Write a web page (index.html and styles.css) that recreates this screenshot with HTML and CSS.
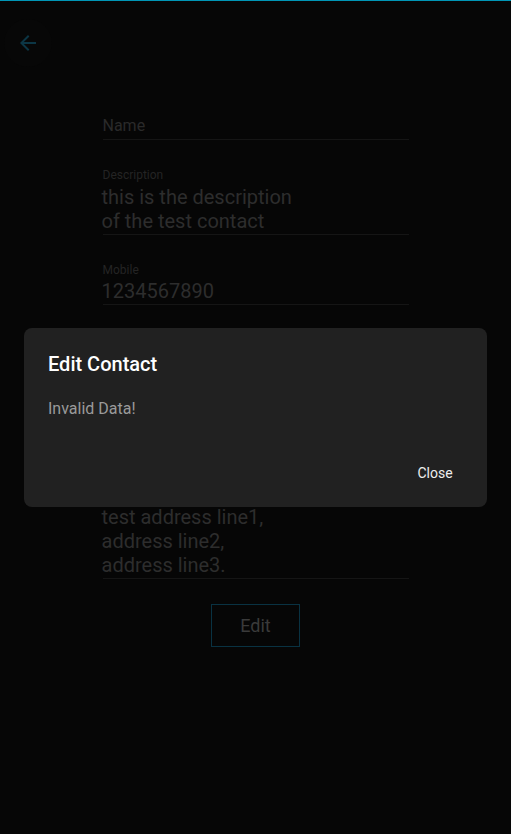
FILE: index.html
```html
<!DOCTYPE html>
<html>
<head>
<meta charset="utf-8">
<link rel="stylesheet" href="styles.css">
</head>
<body>
<div class="topline"></div>
<header class="header">
  <button class="back" aria-label="Back">
    <svg viewBox="0 0 24 24" width="24" height="24"><path d="M20 11H7.83l5.59-5.59L12 4l-8 8 8 8 1.41-1.41L7.83 13H20v-2z" fill="currentColor"/></svg>
  </button>
</header>
<main class="form">
  <div class="field">
    <div class="label"></div>
    <div class="value placeholder">Name</div>
  </div>
  <div class="field">
    <div class="label">Description</div>
    <div class="value multi">this is the description<br>of the test contact</div>
  </div>
  <div class="field">
    <div class="label">Mobile</div>
    <div class="value">1234567890</div>
  </div>
  <div class="field address">
    <div class="label">Address</div>
    <div class="value">test address line1,<br>address line2,<br>address line3.</div>
  </div>
  <div class="actions">
    <button class="edit">Edit</button>
  </div>
</main>
<div class="scrim">
  <div class="dialog">
    <h2 class="dialog-title">Edit Contact</h2>
    <p class="dialog-body">Invalid Data!</p>
    <div class="dialog-actions">
      <button class="close">Close</button>
    </div>
  </div>
</div>
</body>
</html>
```
FILE: styles.css
```css
html, body {
  margin: 0;
  padding: 0;
  background: #060606;
  font-family: Roboto, "Noto Sans", sans-serif;
  height: 834px;
  overflow: hidden;
}
.topline {
  height: 1px;
  background: #0095b5;
}
.header {
  height: 95px;
  box-sizing: border-box;
  padding: 18px 0 0 4px;
}
.back {
  width: 48px;
  height: 48px;
  border-radius: 50%;
  border: none;
  background: #070707;
  color: #0c3645;
  display: flex;
  align-items: center;
  justify-content: center;
  padding: 0;
}
.form {
  width: 306px;
  margin: 0 auto;
  display: flex;
  flex-direction: column;
  gap: 27px;
}
.field {
  border-bottom: 1px solid #151515;
  padding-bottom: 1px;
}
.label {
  height: 16px;
  font-size: 12px;
  line-height: 16px;
  color: #242424;
}
.value {
  padding-top: 1px;
  font-size: 20px;
  line-height: 24px;
  color: #2d2d2d;
  margin-left: -1px;
}
.value.placeholder {
  padding-top: 2px;
  font-size: 16px;
  color: #2a2a2a;
  margin-left: 0;
}
.value.multi {
  padding-top: 2px;
}
.field.address {
  margin-top: 156px;
}
.actions {
  display: flex;
  justify-content: center;
  margin-top: -2px;
}
.edit {
  width: 89px;
  height: 43px;
  background: transparent;
  border: 1px solid #093242;
  color: #3a3a3a;
  font-family: Roboto, sans-serif;
  font-size: 18px;
}
.scrim {
  position: fixed;
  inset: 0;
  display: flex;
  align-items: center;
  justify-content: center;
  padding: 0 24px;
}
.dialog {
  width: 100%;
  height: 179px;
  box-sizing: border-box;
  background: #212121;
  border-radius: 8px;
  padding: 20px 0 16px 24px;
  display: flex;
  flex-direction: column;
  margin-top: 1px;
}
.dialog-title {
  margin: 0;
  font-size: 20px;
  line-height: 32px;
  font-weight: 500;
  color: #ffffff;
}
.dialog-body {
  margin: 17px 0 0;
  font-size: 16px;
  line-height: 24px;
  color: #9a9a9a;
}
.dialog-actions {
  margin-top: auto;
  display: flex;
  justify-content: flex-end;
  padding-right: 20px;
}
.close {
  min-width: 64px;
  height: 36px;
  background: transparent;
  border: none;
  color: #eeeeee;
  font-family: Roboto, sans-serif;
  font-size: 14px;
  padding: 0 8px;
}
```
